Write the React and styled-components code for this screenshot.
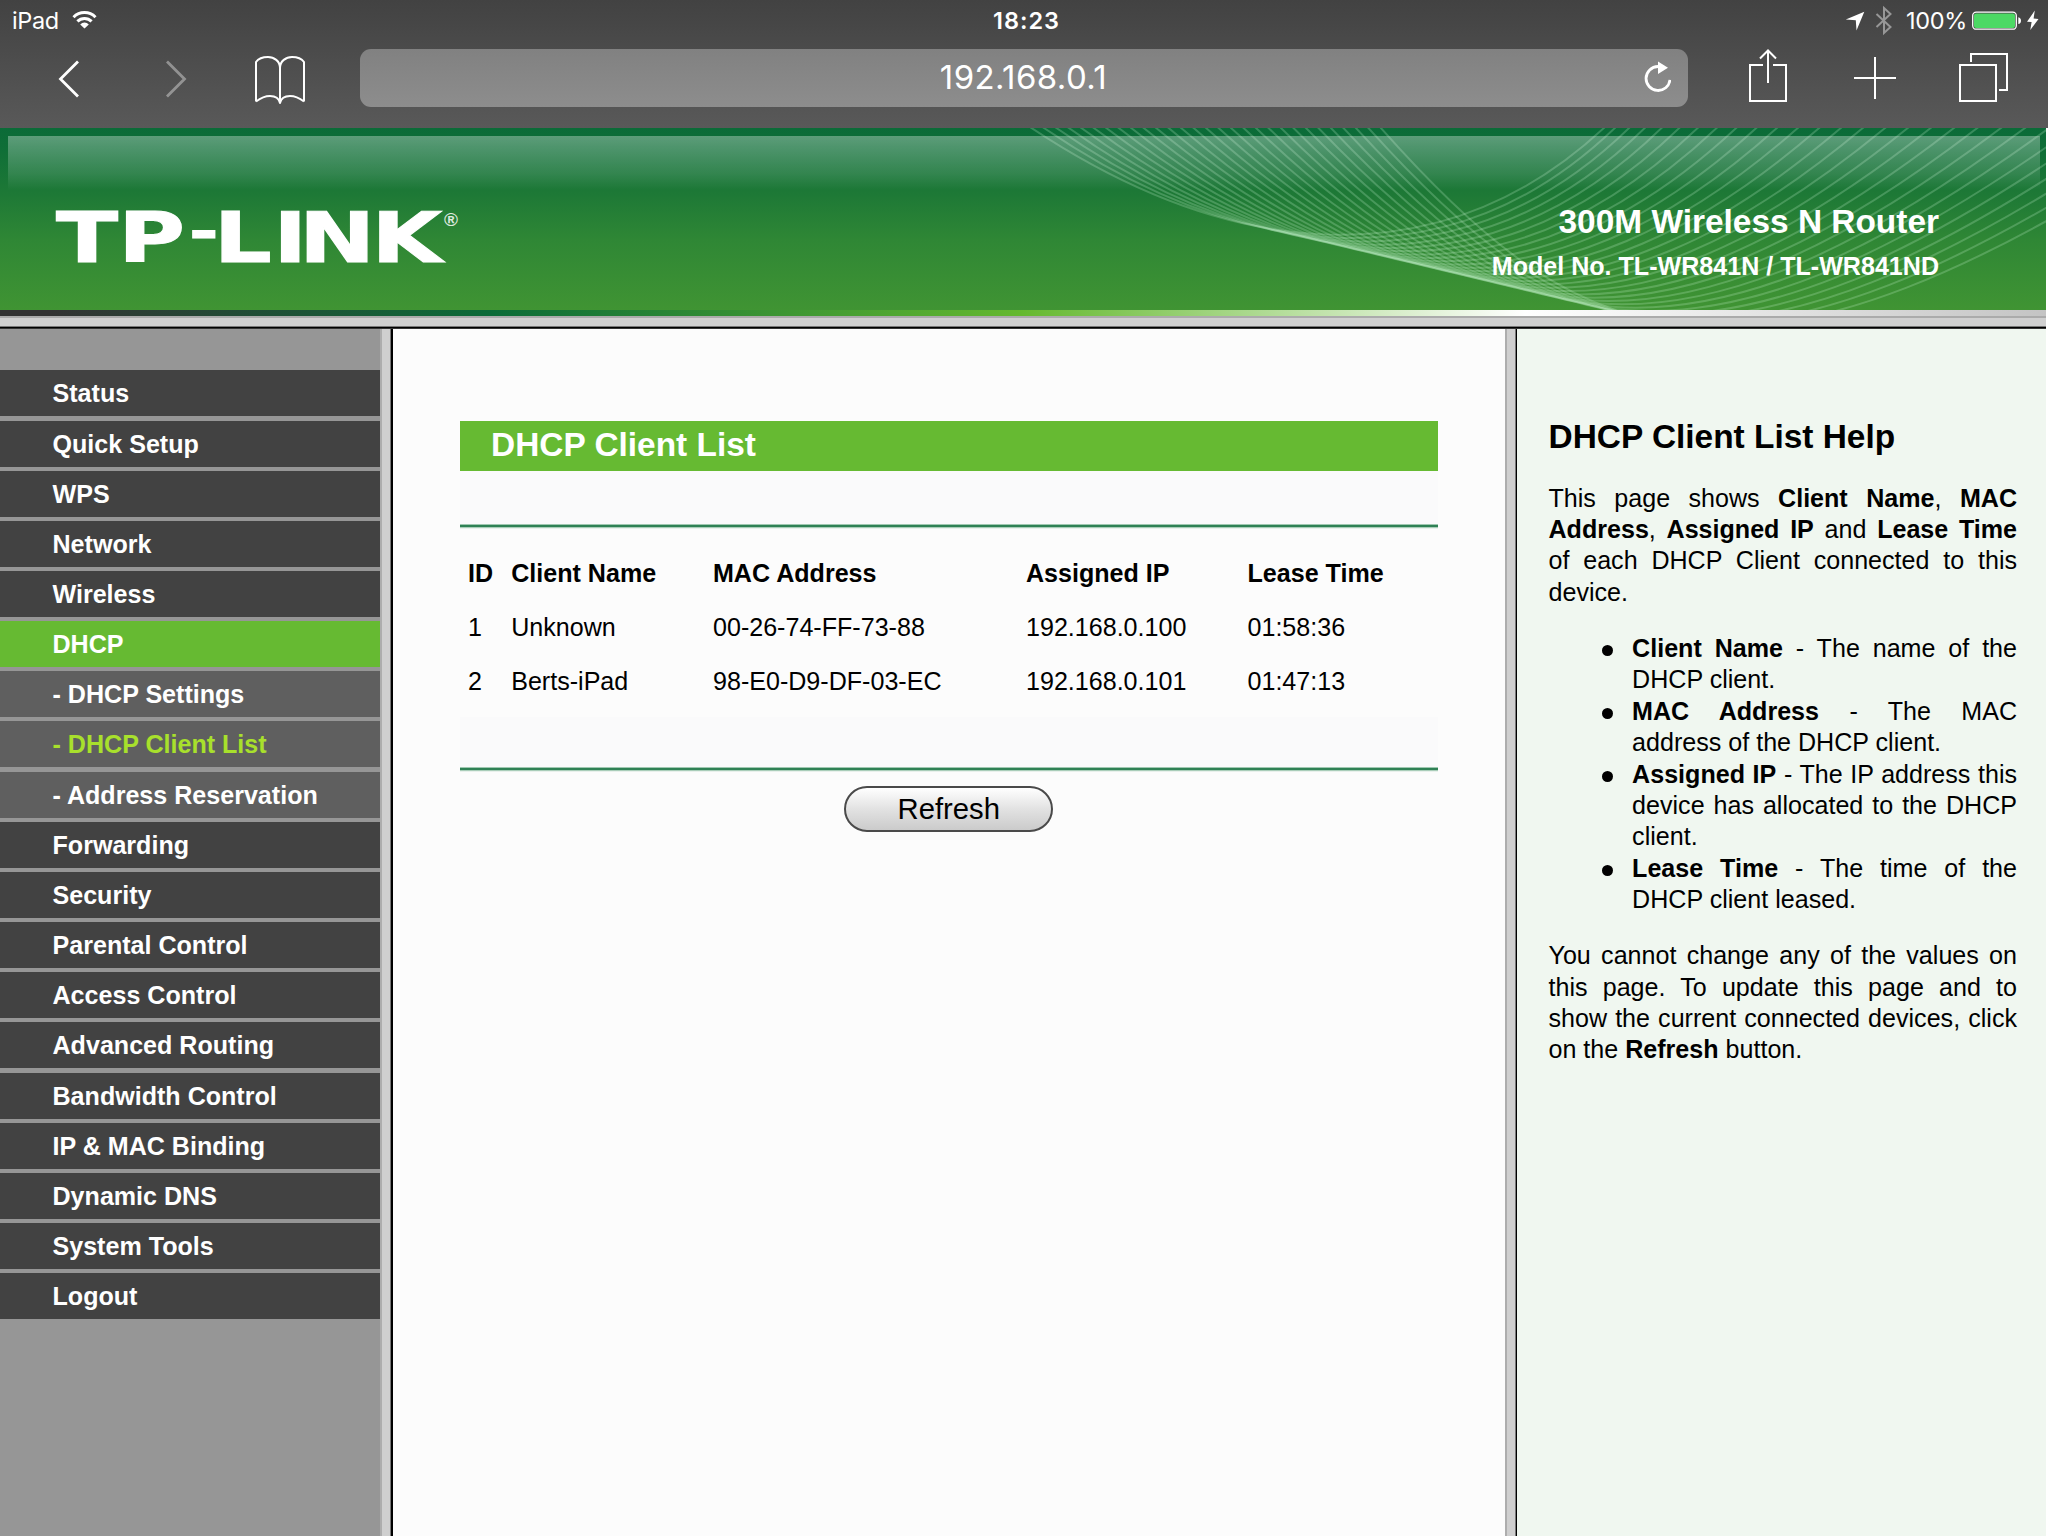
import React from "react";
import styled, { createGlobalStyle } from "styled-components";

const GlobalStyle = createGlobalStyle`
  * { box-sizing: border-box; }
  html, body { margin: 0; padding: 0; background: #fff; }
  body { overflow: hidden; }
`;

const systemFont = `Inter, "Liberation Sans", sans-serif`;
const pageFont = `"Liberation Sans", Arial, sans-serif`;

const Screen = styled.div`
  width: 2048px;
  height: 1536px;
  display: flex;
  flex-direction: column;
  overflow: hidden;
  background: #fff;
`;

/* ---------- browser chrome ---------- */

const Chrome = styled.header`
  flex: none;
  height: 128px;
  background: linear-gradient(#424242, #595959);
  color: #fff;
  font-family: ${systemFont};
`;

const StatusBar = styled.div`
  height: 49px;
  display: grid;
  grid-template-columns: 1fr auto 1fr;
`;

const StatusGroup = styled.div`
  display: flex;
  align-items: flex-start;
  justify-content: ${(p) => (p.$end ? "flex-end" : "flex-start")};
  padding-left: ${(p) => (p.$end ? 0 : 12)}px;
  padding-right: ${(p) => (p.$end ? 7 : 0)}px;
`;

const StatusText = styled.span`
  font-size: 23.5px;
  line-height: 41px;
  font-weight: ${(p) => p.$weight || 400};
  letter-spacing: ${(p) => p.$spacing || 0}px;
  width: ${(p) => (p.$width ? `${p.$width}px` : "auto")};
  white-space: nowrap;
  text-align: ${(p) => p.$align || "left"};
`;

const Clock = styled(StatusText)`
  padding-left: 7px;
  width: 76px;
  font-weight: 600;
  letter-spacing: 1px;
`;

const Toolbar = styled.div`
  display: flex;
  align-items: flex-start;
`;

const IconSlot = styled.span`
  flex: none;
  display: block;
  margin-left: ${(p) => p.$before || 0}px;
  opacity: ${(p) => (p.$dim ? 0.38 : 1)};
  svg { display: block; }
`;

const AddressBar = styled.div`
  flex: none;
  width: 1328px;
  height: 58px;
  margin-left: 52px;
  padding: 0 17px 0 43px;
  border-radius: 11px;
  background: linear-gradient(#818181, #8d8d8d);
  display: flex;
  align-items: center;
`;

const Address = styled.span`
  flex: 1;
  text-align: center;
  font-size: 33px;
  line-height: 56px;
  height: 58px;
  letter-spacing: 0.4px;
`;

function Icon({ x, y = 49, w, h = 58, children, ...slot }) {
  return (
    <IconSlot {...slot}>
      <svg
        width={w}
        height={h}
        viewBox={`${x} ${y} ${w} ${h}`}
        fill="none"
        stroke="#fff"
        strokeWidth="2"
      >
        {children}
      </svg>
    </IconSlot>
  );
}

function BrowserChrome() {
  return (
    <Chrome>
      <StatusBar>
        <StatusGroup>
          <StatusText $width={59} $spacing={-0.4}>iPad</StatusText>
          <Icon x={71} y={0} w={28} h={41}>
            <path d="M73.5 17.2a15.5 15.5 0 0 1 22 0" strokeWidth="3" />
            <path d="M77.4 21.4a10 10 0 0 1 14.200 0" strokeWidth="3" />
            <path d="M84.500 28.600l-4.300-4.200a6 6 0 0 1 8.600 0z" fill="#fff" stroke="none" />
          </Icon>
        </StatusGroup>
        <Clock>18:23</Clock>
        <StatusGroup $end>
          <Icon x={1845} y={0} w={20} h={41}>
            <path d="M1864.300 11.800L1856.500 30.500L1855.800 20.300L1845.800 19.600Z" fill="#fff" stroke="none" />
          </Icon>
          <Icon x={1875} y={0} w={18} h={41} $before={10}>
            <path d="M1876.500 14l14 13-6.500 6V8l6.500 6-14 13" stroke="#979797" />
          </Icon>
          <IconSlot $before={13}>
            <StatusText $width={65} $spacing={-0.3} as="div">100%</StatusText>
          </IconSlot>
          <Icon x={1971} y={0} w={52} h={41}>
            <rect x="1972.700" y="12.200" width="43.600" height="17" rx="3.500" strokeWidth="1.300" />
            <rect x="1974" y="13.500" width="41" height="14.500" rx="2" fill="#4cd964" stroke="none" />
            <path d="M2018.300 17.300q2.700 .6 2.700 3.400t-2.700 3.400z" fill="#fff" stroke="none" />
          </Icon>
          <Icon x={2025} y={0} w={16} h={41} $before={2}>
            <path d="M2034.800 10.500L2027 21.800L2031.600 22L2030.300 30L2038.500 18.900L2033.600 18.600Z" fill="#fff" stroke="none" />
          </Icon>
        </StatusGroup>
      </StatusBar>
      <Toolbar>
        <Icon x={56} w={28} $before={56}>
          <path d="M78 61.500L60.500 79L78 96.500" strokeWidth="2.800" />
        </Icon>
        <Icon x={164} w={28} $before={80} $dim>
          <path d="M167 61.500L184.500 79L167 96.500" strokeWidth="2.800" />
        </Icon>
        <Icon x={252} w={56} $before={60}>
          <path
            d="M256 101.500V62C258.500 58.500 263 57 268 57C274 57 280 61 280 68V103M304 101.500V62C301.500 58.500 297 57 292 57C286 57 280 61 280 68M256 101.500C260 98.500 265 96 270 96C275 96 279 98.500 280 103C281 98.500 285 96 290 96C295 96 300 98.500 304 101.500"
            strokeLinejoin="round"
          />
        </Icon>
        <AddressBar>
          <Address>192.168.0.1</Address>
          <Icon x={1644} w={27}>
            <path d="M1658 66.500A12 12 0 1 0 1670 79.800" strokeWidth="2.800" />
            <path d="M1658 61.500L1668 67.700L1658 74Z" fill="#fff" stroke="none" />
          </Icon>
        </AddressBar>
        <Icon x={1746} w={44} $before={58}>
          <path d="M1763 65H1750V101H1786V65H1773" />
          <path d="M1768 83V51M1760 58.500L1768 50.500L1776 58.500" />
        </Icon>
        <Icon x={1852} w={46} $before={62}>
          <path d="M1854 78H1896M1875 57V99" />
        </Icon>
        <Icon x={1956} w={56} $before={58}>
          <path d="M1960 65H1996V101H1960Z" />
          <path d="M1971 62V54H2007V90H1999" />
        </Icon>
      </Toolbar>
    </Chrome>
  );
}

/* ---------- router banner ---------- */

const Page = styled.div`
  flex: 1;
  width: 2046px;
  min-height: 0;
  display: flex;
  flex-direction: column;
  font-family: ${pageFont};
  font-size: 25.08px;
  color: #000;
`;

const Banner = styled.div`
  flex: none;
  height: 182px;
  position: relative;
  display: flex;
  justify-content: space-between;
  background: linear-gradient(#0b6b38 0, #0e6e37 20px, #1e7936 67px, #2f8735 112px, #409433 182px);
  color: #fff;
`;

const Waves = styled.svg`
  position: absolute;
  left: 0;
  top: 0;
`;

const Gloss = styled.div`
  position: absolute;
  left: 8px;
  right: 6px;
  top: 8px;
  height: 54px;
  background: linear-gradient(rgba(255, 255, 255, 0.33), rgba(255, 255, 255, 0.12) 70%, rgba(255, 255, 255, 0));
`;

const Logo = styled.svg`
  position: relative;
  display: block;
  font-family: "DejaVu Sans", "Liberation Sans", sans-serif;
  font-weight: bold;
`;

const ProductInfo = styled.div`
  position: relative;
  padding: 74px 107px 0 0;
  text-align: right;
  font-weight: bold;
`;

const ProductName = styled.div`
  font-size: 33.44px;
  line-height: 40px;
`;

const ProductModel = styled.div`
  margin-top: 8px;
  font-size: 25.08px;
  line-height: 32px;
`;

const WAVE_COUNT = 29;
const waves = Array.from({ length: WAVE_COUNT }, (_, i) => {
  const t = i / (WAVE_COUNT - 1);
  const mix = (a, b, k = t) => (a + (b - a) * k).toFixed(1);
  const endX = mix(1605, 2200, Math.pow(t, 1.2));
  return `M${mix(1030, 1380)} -1C${mix(1230, 1580)} ${mix(132, 225)} ${mix(1440, 1740)} ${mix(153, 305)} ${endX} -1`;
});

function RouterBanner() {
  return (
    <Banner>
      <Waves width="2046" height="182" viewBox="0 0 2046 182" fill="none">
        {waves.map((d) => (
          <path key={d} d={d} stroke="#d8ffe0" strokeOpacity="0.22" strokeWidth="2" />
        ))}
      </Waves>
      <Gloss />
      <Logo width="480" height="182" viewBox="0 0 480 182" fill="#fff">
        <text
          transform="translate(0 134) scale(1.32 1)"
          fontSize="69"
          x="42.4 89.500"
          stroke="#fff"
          strokeWidth="1"
        >
          TP<tspan x="143.200" y="-12" fontSize="54">-</tspan><tspan x="162 207 226.500 281.500" y="0">LINK</tspan>
        </text>
        <text x="444" y="98" fontSize="19" fontFamily="Liberation Sans" fillOpacity="0.85">®</text>
      </Logo>
      <ProductInfo>
        <ProductName>300M Wireless N Router</ProductName>
        <ProductModel>Model No. TL-WR841N / TL-WR841ND</ProductModel>
      </ProductInfo>
    </Banner>
  );
}

const ColorStrip = styled.div`
  flex: none;
  height: 6px;
  background: linear-gradient(90deg, #333 0, #333 50px, #0b6b38 490px, #65b92f 1022px, #fff 1525px, #c4c4c4 2046px);
`;

const FrameEdge = styled.div`
  flex: none;
  height: 13px;
  background: linear-gradient(#ababab 0 2px, #d0d0d0 2px 10px, #777 10px 11px, #000 11px 12px, #333 12px 13px);
`;

const VerticalEdge = styled.div`
  flex: none;
  width: ${(p) => (p.$narrow ? 12.5 : 13)}px;
  background: linear-gradient(
    90deg,
    #adadad 0 2px,
    #cfcfcf 2px ${(p) => (p.$narrow ? 10.5 : 10)}px,
    #777 ${(p) => (p.$narrow ? 10.5 : 10)}px 11px,
    #000 11px
  );
`;

const Frames = styled.div`
  flex: 1;
  min-height: 0;
  display: flex;
`;

/* ---------- sidebar ---------- */

const Sidebar = styled.nav`
  flex: none;
  width: 380px;
  padding-top: 41.4px;
  background: #969696;
`;

const itemColors = { main: "#424242", open: "#66ba32", sub: "#5f5f5f", active: "#5f5f5f" };

const MenuItem = styled.div`
  height: 46px;
  margin-bottom: 4.16px;
  padding-left: 52.5px;
  line-height: 46px;
  font-weight: bold;
  background: ${(p) => itemColors[p.$kind]};
  color: ${(p) => (p.$kind === "active" ? "#a8e02c" : "#fff")};
`;

const menu = [
  ["Status", "main"],
  ["Quick Setup", "main"],
  ["WPS", "main"],
  ["Network", "main"],
  ["Wireless", "main"],
  ["DHCP", "open"],
  ["- DHCP Settings", "sub"],
  ["- DHCP Client List", "active"],
  ["- Address Reservation", "sub"],
  ["Forwarding", "main"],
  ["Security", "main"],
  ["Parental Control", "main"],
  ["Access Control", "main"],
  ["Advanced Routing", "main"],
  ["Bandwidth Control", "main"],
  ["IP & MAC Binding", "main"],
  ["Dynamic DNS", "main"],
  ["System Tools", "main"],
  ["Logout", "main"],
];

/* ---------- main frame ---------- */

const Main = styled.main`
  flex: 1;
  padding: 91.5px 67px 0 67px;
  background: #fcfcfc;
`;

const Title = styled.h1`
  margin: 0;
  height: 50px;
  padding-left: 31px;
  background: #66ba32;
  color: #fff;
  font-size: 33.44px;
  line-height: 47px;
`;

const Spacer = styled.div`
  height: ${(p) => p.$height}px;
  background: #fafafb;
`;

const Rule = styled.div`
  height: 5px;
  background: linear-gradient(#9fc8b1 0 1px, #2f8155 1px 3px, #a9cdb9 3px 4px, #e9f1ec 4px 5px);
`;

const Clients = styled.div`
  padding: 17px 0 9px 8px;
`;

const ClientRow = styled.div`
  display: grid;
  grid-template-columns: 43.2px 201.8px 313px 221.5px 1fr;
  height: 54.34px;
  line-height: 54px;
  font-weight: ${(p) => (p.$head ? "bold" : "normal")};
`;

const Actions = styled.div`
  display: flex;
  justify-content: center;
  padding-top: 14px;
`;

const RefreshButton = styled.button`
  width: 209px;
  height: 46px;
  padding: 0;
  border: 2px solid #4a4a4a;
  border-radius: 23px;
  background: linear-gradient(#fff, #e2e2e2 50%, #cbcbcb);
  color: #000;
  font-family: ${pageFont};
  font-size: 29.26px;
  line-height: 42px;
`;

const clients = [
  ["ID", "Client Name", "MAC Address", "Assigned IP", "Lease Time"],
  ["1", "Unknown", "00-26-74-FF-73-88", "192.168.0.100", "01:58:36"],
  ["2", "Berts-iPad", "98-E0-D9-DF-03-EC", "192.168.0.101", "01:47:13"],
];

/* ---------- help frame ---------- */

const Help = styled.aside`
  flex: none;
  width: 529px;
  padding: 88px 29px 0 31.500px;
  background: #f0f7f0;
  line-height: 31.35px;
  text-align: justify;
`;

const HelpTitle = styled.h2`
  margin: 0 0 25.7px;
  font-size: 33.44px;
  line-height: 40px;
`;

const HelpText = styled.p`
  margin: 0;
`;

const HelpList = styled.ul`
  margin: 25.08px 0;
  padding: 0 0 0 83.6px;
  list-style: none;
`;

const HelpItem = styled.li`
  position: relative;
  &::before {
    content: "";
    position: absolute;
    left: -30.5px;
    top: 12px;
    width: 11px;
    height: 11px;
    border-radius: 50%;
    background: #000;
  }
`;

export default function App() {
  return (
    <Screen>
      <GlobalStyle />
      <BrowserChrome />
      <Page>
        <RouterBanner />
        <ColorStrip />
        <FrameEdge />
        <Frames>
          <Sidebar>
            {menu.map(([label, kind]) => (
              <MenuItem key={label} $kind={kind}>{label}</MenuItem>
            ))}
          </Sidebar>
          <VerticalEdge />
          <Main>
            <Title>DHCP Client List</Title>
            <Spacer $height={53} />
            <Rule />
            <Clients>
              {clients.map((row, i) => (
                <ClientRow key={row[0]} $head={i === 0}>
                  {row.map((cell) => (
                    <span key={cell}>{cell}</span>
                  ))}
                </ClientRow>
              ))}
            </Clients>
            <Spacer $height={50} />
            <Rule />
            <Actions>
              <RefreshButton>Refresh</RefreshButton>
            </Actions>
          </Main>
          <VerticalEdge $narrow />
          <Help>
            <HelpTitle>DHCP Client List Help</HelpTitle>
            <HelpText>
              This page shows <b>Client Name</b>, <b>MAC Address</b>, <b>Assigned IP</b> and{" "}
              <b>Lease Time</b> of each DHCP Client connected to this device.
            </HelpText>
            <HelpList>
              <HelpItem><b>Client Name</b> - The name of the DHCP client.</HelpItem>
              <HelpItem><b>MAC Address</b> - The MAC address of the DHCP client.</HelpItem>
              <HelpItem><b>Assigned IP</b> - The IP address this device has allocated to the DHCP client.</HelpItem>
              <HelpItem><b>Lease Time</b> - The time of the DHCP client leased.</HelpItem>
            </HelpList>
            <HelpText>
              You cannot change any of the values on this page. To update this page and to show
              the current connected devices, click on the <b>Refresh</b> button.
            </HelpText>
          </Help>
        </Frames>
      </Page>
    </Screen>
  );
}
